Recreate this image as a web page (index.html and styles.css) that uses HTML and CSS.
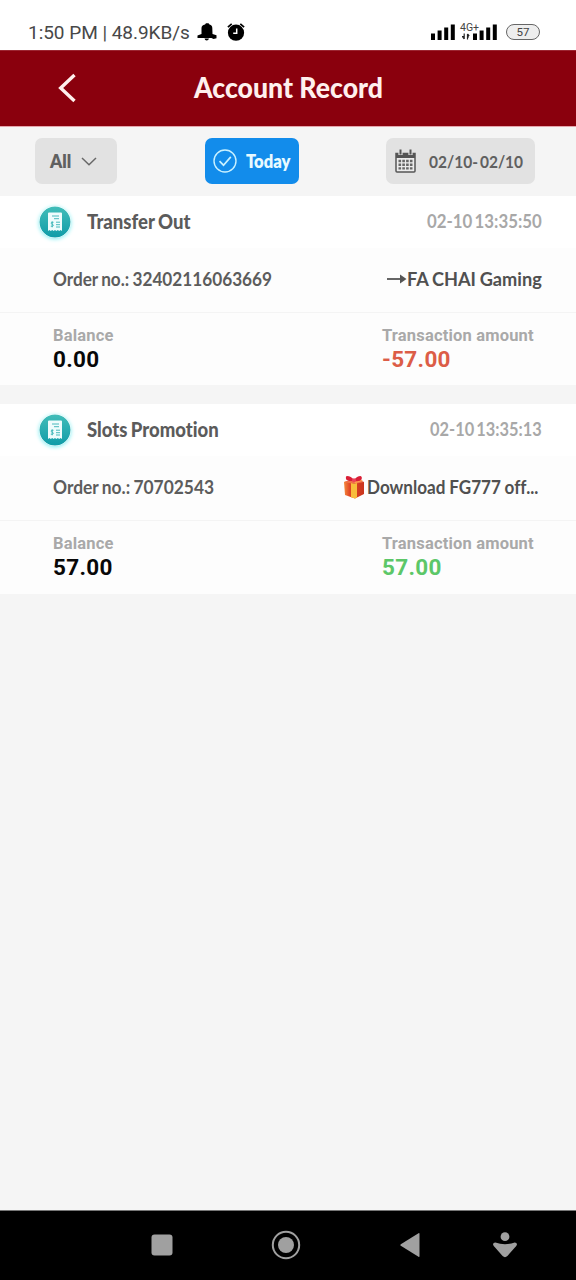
FILE: index.html
```html
<!DOCTYPE html>
<html lang="en">
<head>
<meta charset="utf-8">
<title>Account Record</title>
<link rel="stylesheet" href="styles.css">
</head>
<body>
<svg class="defs" width="0" height="0" aria-hidden="true">
  <defs>
    <linearGradient id="teal" x1="0" y1="0" x2="0" y2="1"><stop offset="0" stop-color="#41bdb9"/><stop offset="1" stop-color="#109ca8"/></linearGradient>
    <linearGradient id="box" x1="0" y1="0" x2="1" y2="0"><stop offset="0" stop-color="#f58a3c"/><stop offset=".3" stop-color="#e04324"/><stop offset="1" stop-color="#c9351d"/></linearGradient>
    <symbol id="receipt" viewBox="0 0 32 32">
      <circle cx="16" cy="16" r="15.5" fill="url(#teal)"/>
      <path d="M9 7.5q0-1 1-1h12q1 0 1 1V25l-1.4-1-1.4 1-1.4-1-1.4 1-1.4-1-1.4 1-1.4-1-1.4 1-1.4-1L9 25z" fill="#effcfc"/>
      <path d="M13 10h7M15 12.700h5M17 16.200h4M17 18.700h4M17 21h4M14.500 16.300h-2q-1 1.200.3 1.700l1 .4q1.200.7 0 1.800h-2M13.200 15.300v6" fill="none" stroke="#36b2b5" stroke-width=".9"/>
    </symbol>
  </defs>
</svg>
<div class="phone">
  <div class="status">
    <span class="clock">1:50 PM | 48.9KB/s</span>
    <svg class="bell" width="20" height="18" viewBox="0 0 20 18"><path d="M4.500 9V5Q4.500 2 8 1.500L9 .3h2.500l1 1.200q2.800.5 2.800 3.500l.2 6 4 1.200v3l-3 .8-2-1H.5v-2.500L4.500 11zM7.500 15.500h4.500q-.5 2-2.300 2t-2.200-2z"/></svg>
    <svg class="alarm" width="18" height="18" viewBox="0 0 18 18"><circle cx="9" cy="9.700" r="8.100"/><path d="M.9 4.200 4.700.9M13.300.9l3.800 3.300" stroke="#000" stroke-width="1.700"/><path d="M9.700 5.500v4.700H6.200" fill="none" stroke="#fff" stroke-width="1.500"/></svg>
    <div class="signals">
      <svg width="24" height="16" viewBox="0 0 24 16"><path d="M0 9.500h4V16H0zM6.600 6.500h4V16h-4zM13.200 3.500h4V16h-4zM19.800.5h4V16h-4z"/></svg>
      <div class="network"><span>4G+</span><svg width="8" height="7" viewBox="0 0 8 7"><path d="M2.200.5V6M.6 4l1.600 2M5.500 6.500V1M7.200 3 5.500 1M0 3.500h2M5 4h2" stroke="#222" stroke-width="1.200" fill="none"/></svg></div>
      <svg width="24" height="16" viewBox="0 0 24 16"><path d="M0 9.500h4V16H0zM6.600 6.500h4V16h-4zM13.200 3.500h4V16h-4zM19.800.5h4V16h-4z"/></svg>
      <span class="battery">57</span>
    </div>
  </div>

  <header class="header">
    <svg class="back" width="18" height="30" viewBox="0 0 18 30"><path d="M16.500 2 2.700 15l13.800 13" fill="none" stroke="#fff0ed" stroke-width="3.400"/></svg>
    <h1><span class="fit title">Account Record</span></h1>
  </header>

  <div class="filters">
    <div class="chip all"><span class="fit all-label">All</span><svg width="16" height="9" viewBox="0 0 16 9"><path d="m1 1 7 6.700L15 1" fill="none" stroke="#686868" stroke-width="1.500"/></svg></div>
    <div class="chip today"><svg width="24" height="24" viewBox="0 0 24 24"><circle cx="12" cy="12" r="11" fill="none" stroke="#c9f1ff" stroke-width="1.400"/><path d="m6.500 12.200 4 4 7.300-8.300" fill="none" stroke="#c9f1ff" stroke-width="1.700"/></svg><span class="fit today-label">Today</span></div>
    <div class="chip range"><svg width="21" height="24" viewBox="0 0 21 24"><path d="M1 4.500h19V22q0 1-1 1H2q-1 0-1-1z" fill="#ececec" stroke="#555" stroke-width="1.500"/><path d="M1 4h19v5H1z" fill="#555"/><path d="M5.500 1v5M15.500 1v5" stroke="#e2e2e2" stroke-width="4.200"/><path d="M5.500.5v5M15.500.5v5" stroke="#555" stroke-width="2"/><path d="M3.500 12h14M3.500 15.700h14M3.500 19.400h14" stroke="#666" stroke-width="2.400" stroke-dasharray="2.600 1.200"/></svg><span class="fit range-label">02/10- 02/10</span></div>
  </div>

  <main>
    <section class="record">
      <div class="record-head"><svg class="badge" width="32" height="32"><use href="#receipt"/></svg><span class="fit name name-transfer">Transfer Out</span><time class="fit stamp">02-10 13:35:50</time></div>
      <div class="order"><span class="fit number">Order no.: 32402116063669</span><span class="detail"><svg class="arrow" width="20" height="12" viewBox="0 0 20 12"><path d="M0 6h15" stroke="#555" stroke-width="1.800"/><path d="m13 1.500 6.500 4.500-6.500 4.500z" fill="#555"/></svg><span class="fit game">FA CHAI Gaming</span></span></div>
      <div class="amounts"><div class="balance"><span class="label">Balance</span><strong>0.00</strong></div><div class="transaction"><span class="label">Transaction amount</span><strong class="negative">-57.00</strong></div></div>
    </section>
    <section class="record last">
      <div class="record-head"><svg class="badge" width="32" height="32"><use href="#receipt"/></svg><span class="fit name name-slots">Slots Promotion</span><time class="fit stamp stamp-short">02-10 13:35:13</time></div>
      <div class="order"><span class="fit number number-short">Order no.: 70702543</span><span class="detail promo"><svg class="gift" width="22" height="24" viewBox="0 0 22 24"><path d="m1 7 10-3 10 3v12l-9 4.500L2 20z" fill="url(#box)"/><path d="m1 7 10 2 10-2-10-3z" fill="#ef7047"/><path d="m8 8 3 1 3-1v14.500l-2 1-4-1.200z" fill="#f8bc3c"/><path d="m11 6.500 6-2.300 3 1.600-8 2.500z" fill="#ff9c4d"/><path d="M11 6Q4 6.500 3 4q-.5-3 1-3 4 .2 7 4 3-4 6.500-4 2 .5 1 3.500Q17 7 11 6z" fill="#d91f36"/><circle cx="11" cy="5.300" r="2" fill="#ed4259"/></svg><span class="fit offer">Download FG777 off...</span></span></div>
      <div class="amounts"><div class="balance"><span class="label">Balance</span><strong>57.00</strong></div><div class="transaction"><span class="label">Transaction amount</span><strong class="positive">57.00</strong></div></div>
    </section>
  </main>

  <nav class="navbar">
    <svg width="22" height="22" viewBox="0 0 22 22"><rect x=".5" y=".5" width="21" height="21" rx="3"/></svg>
    <svg width="30" height="30" viewBox="0 0 30 30"><circle cx="15" cy="15" r="13.200" fill="none" stroke="#a0a0a0" stroke-width="2"/><circle cx="15" cy="15" r="8"/></svg>
    <svg width="20" height="26" viewBox="0 0 20 26"><path d="M18.500 1.200q1-.6 1 .8v22q0 1.400-1 .8L.8 13.800q-1-.8 0-1.600z"/></svg>
    <svg width="24" height="26" viewBox="0 0 24 26"><circle cx="12" cy="4.700" r="4.400"/><path d="M2.300 10.400Q12 14 21.700 10.400q2.500 0 2.200 2.300-.3 1.300-2 2.700l-7.500 8.600q-2.400 2.300-4.800 0L2.100 15.400Q.4 14 .1 12.700q-.3-2.300 2.200-2.300z"/></svg>
  </nav>
</div>
</body>
</html>
```

FILE: styles.css
```css
* { box-sizing: border-box; }
body { margin: 0; background: #f5f5f5; font-family: Lato, "Liberation Sans", sans-serif; }
.defs { position: absolute; }
svg { display: block; flex: none; }
.phone { width: 576px; height: 1280px; display: flex; flex-direction: column; overflow: hidden; }
.fit { display: block; white-space: nowrap; transform-origin: left center; font-variant-ligatures: none; }

.status { height: 50px; padding: 14px 36px 0 28px; display: flex; align-items: center; background: #fff; font-family: Roboto, sans-serif; flex: none; }
.clock { width: 162px; font-size: 19px; color: #484848; white-space: nowrap; letter-spacing: -.03px; }
.bell { margin-left: 7px; }
.alarm { margin-left: 10px; }
.signals { margin-left: auto; display: flex; align-items: center; }
.network { width: 18px; height: 18px; display: flex; flex-direction: column; align-items: flex-start; padding-left: 5px; }
.network span { font-size: 10.500px; line-height: 10px; color: #444; white-space: nowrap; }
.network svg { margin: 0 0 0 2px; }
.battery { width: 34px; height: 16px; margin-left: 9px; border: 1.500px solid #666; border-radius: 8px; background: #eee; color: #444; font-size: 11.500px; line-height: 14px; text-align: center; }

.header { height: 76px; flex: none; display: flex; align-items: center; background: #8a000d; padding: 0 0 2px 58px; border-top: 1px solid #9c2632; }
.header h1 { margin: 0 0 0 118px; color: #fff0ed; font-size: 29px; line-height: 40px; font-weight: 900; }
.title { transform: translateY(-1px) scaleX(.918); }

.filters { height: 70px; flex: none; display: flex; padding: 11px 41px 0 35px; justify-content: space-between; border-top: 1px solid #e5a5ac; }
.chip { height: 46px; border-radius: 7px; background: #e2e2e2; color: #606060; display: flex; align-items: center; font-size: 18px; font-weight: 800; }
.all { width: 82px; padding-left: 15px; gap: 10px; }
.all-label { width: 21px; transform: scaleX(.96); }
.today { width: 94px; padding-left: 8px; gap: 9px; background: #128ceb; color: #e8faff; }
.today-label { transform: scaleX(.92); }
.range { width: 149px; padding-left: 9px; gap: 13px; }
.range-label { font-size: 17.500px; font-weight: 700; transform: scaleX(.885); word-spacing: -2px; }

main { flex: 1; display: flex; flex-direction: column; gap: 19px; }
.record { height: 189px; background: #fdfdfd; }
.last { height: 190px; }
.record-head { height: 52px; display: flex; align-items: center; padding: 0 34px 0 39px; background: #fff; }
.badge { border-radius: 50%; box-shadow: 0 1px 4px #83eef2; }
.name { margin-left: 16px; font-size: 20px; font-weight: 900; color: #5b5b5b; word-spacing: -1px; }
.name-transfer { transform: translateY(-1px) scaleX(.928); }
.name-slots { transform: translateY(-1px) scaleX(.924); }
.stamp { margin-left: auto; font-size: 18px; font-weight: 700; color: #a8a8a8; transform-origin: right center; transform: translateY(-1px) scaleX(.935); word-spacing: -2px; }
.stamp-short { transform: translateY(-1px) scaleX(.91); }
.order { height: 65px; display: flex; align-items: center; justify-content: space-between; padding: 0 34px 2px 53px; border-bottom: 1px solid #f4f4f4; font-size: 18.500px; font-weight: 700; color: #5c5c5c; }
.number { transform: scaleX(.929); word-spacing: -1px; }
.number-short { transform: scaleX(.94); }
.detail { display: flex; align-items: center; color: #505050; }
.game { width: 135px; transform: scaleX(.982); word-spacing: -.7px; }
.promo { width: 199px; gap: 2px; }
.offer { transform: scaleX(.925); word-spacing: -.5px; }
.amounts { height: 72px; padding: 13px 0 0 53px; display: flex; font-family: Roboto, sans-serif; }
.balance { width: 329px; }
.label { display: block; font-size: 16.500px; line-height: 20px; font-weight: 700; color: #a9a9a9; letter-spacing: .18px; }
.amounts strong { display: block; font-size: 22.500px; line-height: 26px; color: #080808; letter-spacing: .3px; }
.amounts .negative { color: #dc5d47; }
.amounts .positive { color: #5cc768; }

.navbar { height: 70px; flex: none; background: #000; border-top: 1px solid #777; display: flex; align-items: center; padding: 0 0 1px 151px; fill: #a0a0a0; }
.navbar svg:nth-child(2) { margin-left: 98px; }
.navbar svg:nth-child(3) { margin-left: 99px; }
.navbar svg:nth-child(4) { margin-left: 73px; }
```
